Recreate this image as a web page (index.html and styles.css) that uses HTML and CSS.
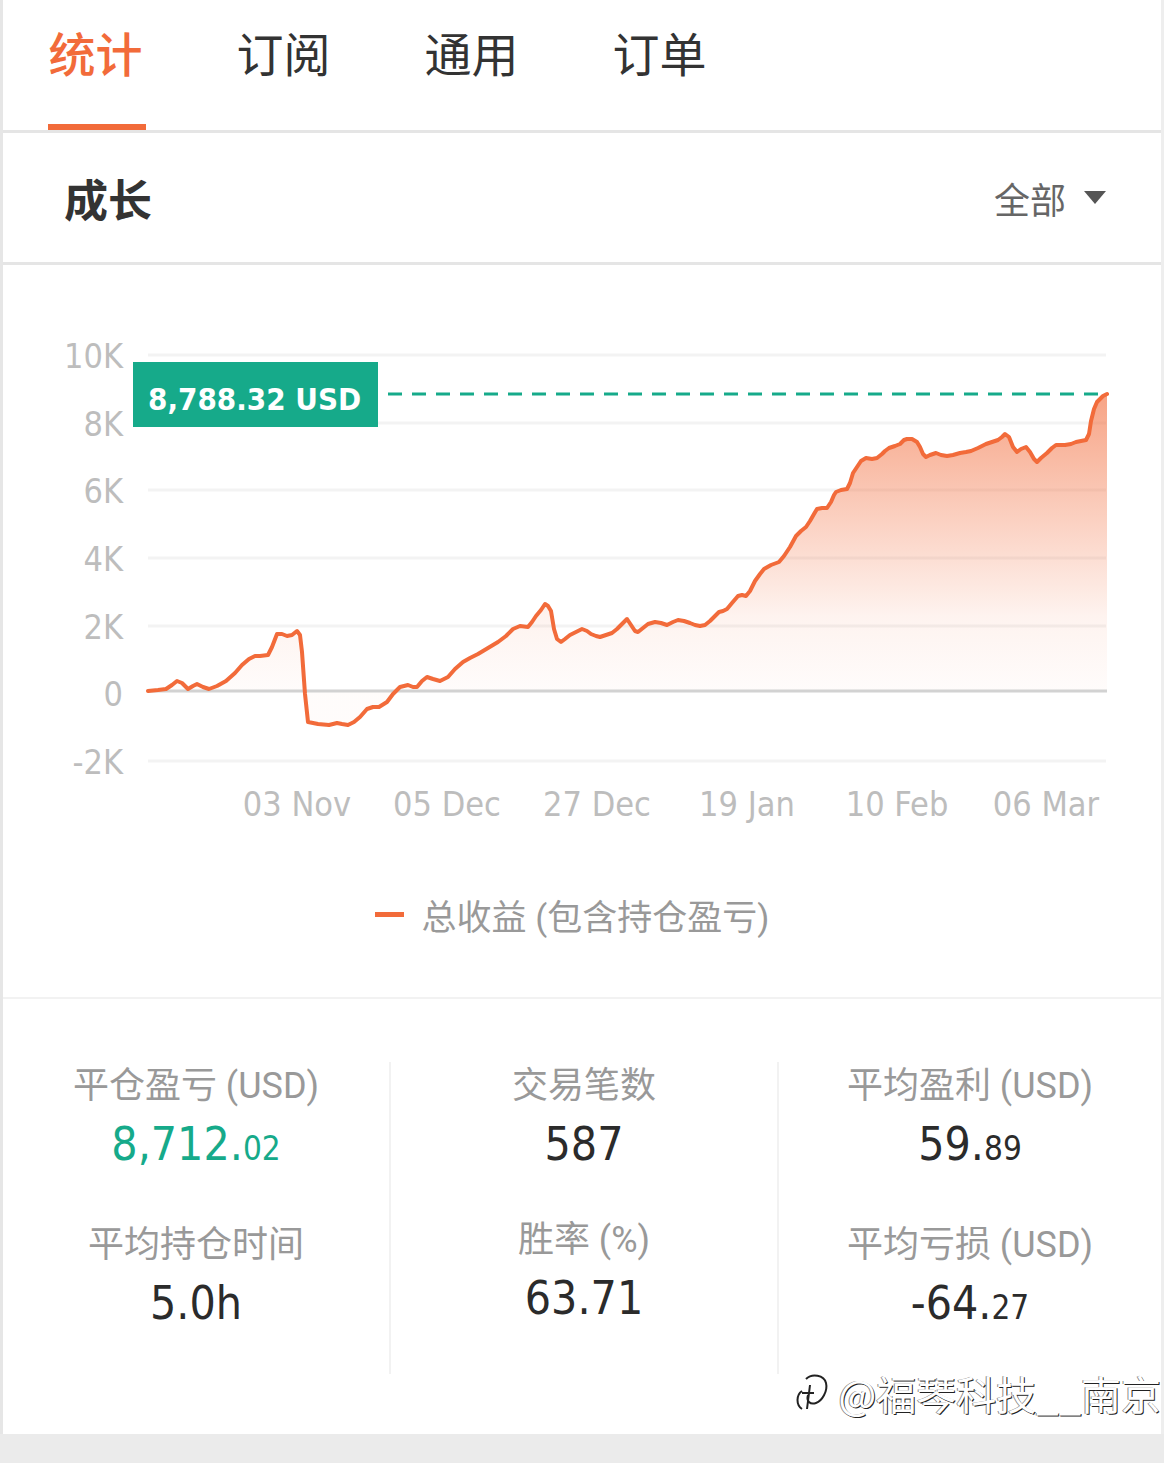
FILE: index.html
```html
<!DOCTYPE html>
<html lang="zh">
<head>
    <meta charset="UTF-8">
    <title>统计</title>
    <link rel="stylesheet" href="styles.css">
</head>
<body>
    <div class="page">
        <nav class="tabs">
            <a class="tab active">统计</a>
            <a class="tab">订阅</a>
            <a class="tab">通用</a>
            <a class="tab">订单</a>
        </nav>

        <section class="growth">
            <header class="growth-head">
                <h2>成长</h2>
                <div class="filter">全部<span class="caret"></span></div>
            </header>

            <svg class="chart" width="1162" height="594" viewBox="3 266 1162 594">
                <defs>
                    <linearGradient id="areaFill" gradientUnits="userSpaceOnUse" x1="0" y1="395" x2="0" y2="692">
                        <stop offset="0" stop-color="#f26b3a" stop-opacity="0.62"/>
                        <stop offset="0.4" stop-color="#f26b3a" stop-opacity="0.33"/>
                        <stop offset="0.75" stop-color="#f26b3a" stop-opacity="0.08"/>
                        <stop offset="1" stop-color="#f26b3a" stop-opacity="0.02"/>
                    </linearGradient>
                </defs>

                <!-- grille -->
                <g class="grid">
                    <line x1="148" y1="356" x2="1106" y2="356"/>
                    <line x1="148" y1="424" x2="1106" y2="424"/>
                    <line x1="148" y1="491" x2="1106" y2="491"/>
                    <line x1="148" y1="559" x2="1106" y2="559"/>
                    <line x1="148" y1="627" x2="1106" y2="627"/>
                    <line x1="148" y1="762" x2="1106" y2="762"/>
                </g>

                <g class="y-labels">
                    <text x="123" y="369">10K</text>
                    <text x="123" y="437">8K</text>
                    <text x="123" y="504">6K</text>
                    <text x="123" y="572">4K</text>
                    <text x="123" y="640">2K</text>
                    <text x="123" y="707">0</text>
                    <text x="123" y="775">-2K</text>
                </g>

                <g class="x-labels">
                    <text x="297" y="817">03 Nov</text>
                    <text x="447" y="817">05 Dec</text>
                    <text x="597" y="817">27 Dec</text>
                    <text x="747" y="817">19 Jan</text>
                    <text x="897" y="817">10 Feb</text>
                    <text x="1046" y="817">06 Mar</text>
                </g>

                <path id="area" class="area" fill="url(#areaFill)"/>
                <line class="zero" x1="148" y1="692" x2="1107" y2="692"/>
                <polyline id="line" class="line"/>

                <line class="dash" x1="388" y1="395" x2="1106" y2="395"/>
                <rect class="badge" x="133" y="363" width="245" height="65"/>
                <text class="badge-text" x="148" y="411">8,788.32 USD</text>
            </svg>

            <div class="legend">
                <span class="legend-mark"></span>
                <span>总收益 (包含持仓盈亏)</span>
            </div>
        </section>

        <section class="stats">
            <div class="stat-col">
                <div class="stat">
                    <div class="stat-label">平仓盈亏 (USD)</div>
                    <div class="stat-value green">8,712.<small>02</small></div>
                </div>
                <div class="stat">
                    <div class="stat-label">平均持仓时间</div>
                    <div class="stat-value">5.0h</div>
                </div>
            </div>
            <div class="stat-col">
                <div class="stat">
                    <div class="stat-label">交易笔数</div>
                    <div class="stat-value">587</div>
                </div>
                <div class="stat">
                    <div class="stat-label">胜率 (%)</div>
                    <div class="stat-value">63.71</div>
                </div>
            </div>
            <div class="stat-col">
                <div class="stat">
                    <div class="stat-label">平均盈利 (USD)</div>
                    <div class="stat-value">59.<small>89</small></div>
                </div>
                <div class="stat">
                    <div class="stat-label">平均亏损 (USD)</div>
                    <div class="stat-value">-64.<small>27</small></div>
                </div>
            </div>

            <div class="watermark">
                <svg class="wm-logo" width="40" height="44" viewBox="0 0 40 44">
                    <path d="M8 38 C2 34 2 24 8 20 M12 8 C18 2 30 4 32 12 C34 20 28 30 22 32 C16 34 12 30 14 24 M8 22 L20 22 M16 14 L13 38" />
                </svg>
                <span>@福琴科技__南京</span>
            </div>
        </section>
        <div class="bottom-bar"></div>
    </div>

    <script>
        // courbe des gains cumulés (coordonnées de l'écran)
        const points = [
            148,692, 158,691, 166,690, 172,686, 177,682, 182,684, 188,690, 193,687, 197,685, 203,688,
            209,690, 217,687, 226,682, 235,674, 242,666, 249,660, 255,657, 260,657, 268,656, 272,648,
            277,635, 282,635, 287,637, 292,636, 297,632, 300,636, 302,653, 305,695, 308,723, 318,725,
            329,726, 337,724, 342,725, 348,726, 354,723, 360,718, 367,710, 373,708, 379,708, 387,703,
            393,695, 400,688, 408,686, 413,688, 417,688, 422,682, 427,678, 433,680, 440,682, 448,678,
            455,670, 463,663, 470,659, 478,655, 488,649, 498,643, 506,637, 513,630, 520,627, 528,628,
            532,623, 536,617, 541,611, 545,605, 548,607, 551,612, 554,630, 557,640, 561,643, 565,640,
            570,636, 576,633, 582,630, 587,632, 591,635, 596,637, 600,638, 606,636, 612,634, 617,630,
            622,625, 627,620, 631,626, 635,632, 638,633, 643,629, 648,625, 655,623, 661,624, 667,626,
            673,623, 678,621, 684,622, 690,624, 695,626, 700,627, 705,626, 710,622, 715,617, 719,613,
            723,612, 727,610, 732,604, 738,597, 742,596, 746,597, 750,592, 755,582, 760,575, 764,570,
            771,566, 779,563, 784,557, 790,548, 796,537, 801,532, 806,528, 810,522, 814,515, 817,510,
            822,509, 827,509, 831,503, 834,496, 836,493, 841,491, 847,490, 850,484, 853,474, 857,468,
            861,462, 866,459, 872,460, 877,459, 882,455, 885,452, 889,449, 895,447, 900,445, 904,441,
            907,440, 912,440, 917,443, 920,448, 923,455, 926,458, 930,456, 936,454, 941,456, 947,457,
            953,456, 960,454, 966,453, 971,452, 978,449, 986,445, 992,443, 998,441, 1002,438, 1005,435,
            1009,438, 1013,448, 1017,453, 1021,450, 1026,448, 1030,453, 1034,460, 1037,463, 1041,459,
            1047,454, 1052,449, 1056,446, 1061,446, 1065,446, 1071,445, 1076,443, 1081,442, 1086,441,
            1089,435, 1091,422, 1094,410, 1097,403, 1100,400, 1103,397, 1107,395
        ];

        const pairs = [];
        for (let i = 0; i < points.length; i += 2) {
            pairs.push(points[i] + ',' + points[i + 1]);
        }

        document.getElementById('line').setAttribute('points', pairs.join(' '));
        document.getElementById('area').setAttribute('d', 'M' + pairs.join(' L') + ' L1107,692 L148,692 Z');
    </script>
</body>
</html>
```

FILE: styles.css
```css
body {
    margin: 0;
    padding: 0;
    background-color: #fff;
    font-family: "Noto Sans CJK SC", "Noto Sans", sans-serif;
    color: #333;
}
.page {
    width: 1158px;
    margin-left: 0;
    border-left: 3px solid #e6e6e6;
    border-right: 3px solid #eeeeee;
    background-color: #fff;
}
.tabs {
    display: flex;
    height: 130px;
    padding-left: 45px;
    gap: 93px;
    border-bottom: 3px solid #e5e5e5;
}
.tab {
    position: relative;
    font-size: 47px;
    line-height: 104px;
    color: #333;
    width: 95px;
    text-align: center;
}
.tab.active {
    color: #f26b3a;
    font-weight: 500;
}
.tab.active::after {
    content: "";
    position: absolute;
    left: 0;
    right: -3px;
    top: 124px;
    height: 6px;
    background-color: #f26b3a;
}
.growth-head {
    display: flex;
    align-items: center;
    justify-content: space-between;
    height: 129px;
    padding: 0 55px 0 61px;
    border-bottom: 3px solid #e5e5e5;
}
.growth-head h2 {
    margin: 0;
    font-size: 44px;
    font-weight: 700;
    color: #333;
}
.filter {
    display: flex;
    align-items: center;
    font-size: 36px;
    color: #666;
}
.caret {
    margin-left: 18px;
    width: 0;
    height: 0;
    border-left: 11px solid transparent;
    border-right: 11px solid transparent;
    border-top: 13px solid #555;
}
.chart {
    display: block;
}
.grid line {
    stroke: #f3f3f3;
    stroke-width: 3;
}
.zero {
    stroke: #d2d2d2;
    stroke-width: 3;
}
.y-labels text, .x-labels text {
    font-family: "DejaVu Sans Condensed", "Liberation Sans Narrow", Roboto, sans-serif;
    font-size: 34px;
    fill: #bdbdbd;
}
.y-labels text {
    text-anchor: end;
}
.x-labels text {
    text-anchor: middle;
}
.line {
    fill: none;
    stroke: #f26b3a;
    stroke-width: 4;
    stroke-linejoin: round;
    stroke-linecap: round;
}
.dash {
    stroke: #16aa8a;
    stroke-width: 3;
    stroke-dasharray: 14 10;
}
.badge {
    fill: #16aa8a;
}
.badge-text {
    font-family: "DejaVu Sans Condensed", "Liberation Sans Narrow", Roboto, sans-serif;
    font-size: 31px;
    font-weight: 700;
    fill: #fff;
}
.legend {
    display: flex;
    align-items: center;
    justify-content: center;
    gap: 18px;
    height: 110px;
    padding: 0 20px 28px 0;
    font-family: Roboto, "Noto Sans CJK SC", sans-serif;
    font-size: 35px;
    color: #999;
    border-bottom: 2px solid #f2f2f2;
}
.legend-mark {
    width: 29px;
    height: 5px;
    background-color: #f26b3a;
}
.stats {
    position: relative;
    display: grid;
    grid-template-columns: 386px 388px 1fr;
    padding: 63px 0 60px 0;
}
.stat-col {
    height: 312px;
    text-align: center;
}
.stat-col + .stat-col {
    border-left: 2px solid #f2f2f2;
}
.stat + .stat {
    margin-top: 42px;
}
.stat-label {
    font-family: Roboto, "Noto Sans CJK SC", sans-serif;
    font-size: 36px;
    line-height: 48px;
    color: #999;
}
.stat-value {
    margin-top: 4px;
    font-family: "DejaVu Sans Condensed", "Liberation Sans Narrow", Roboto, sans-serif;
    font-size: 46px;
    font-weight: 500;
    line-height: 60px;
    color: #2b2b2b;
}
.stat-value small {
    font-size: 33px;
}
.stat-value.green {
    color: #16aa8a;
}
.watermark {
    position: absolute;
    right: 0;
    bottom: 12px;
    display: flex;
    align-items: center;
    gap: 4px;
    font-size: 40px;
    color: #fff;
    text-shadow: 1px 1px 0 #222, -1px 0 0 #888;
}
.wm-logo path {
    fill: none;
    stroke: #222;
    stroke-width: 2;
}
.bottom-bar {
    height: 29px;
    margin-left: -3px;
    margin-right: -3px;
    background-color: #ebebeb;
}
```
